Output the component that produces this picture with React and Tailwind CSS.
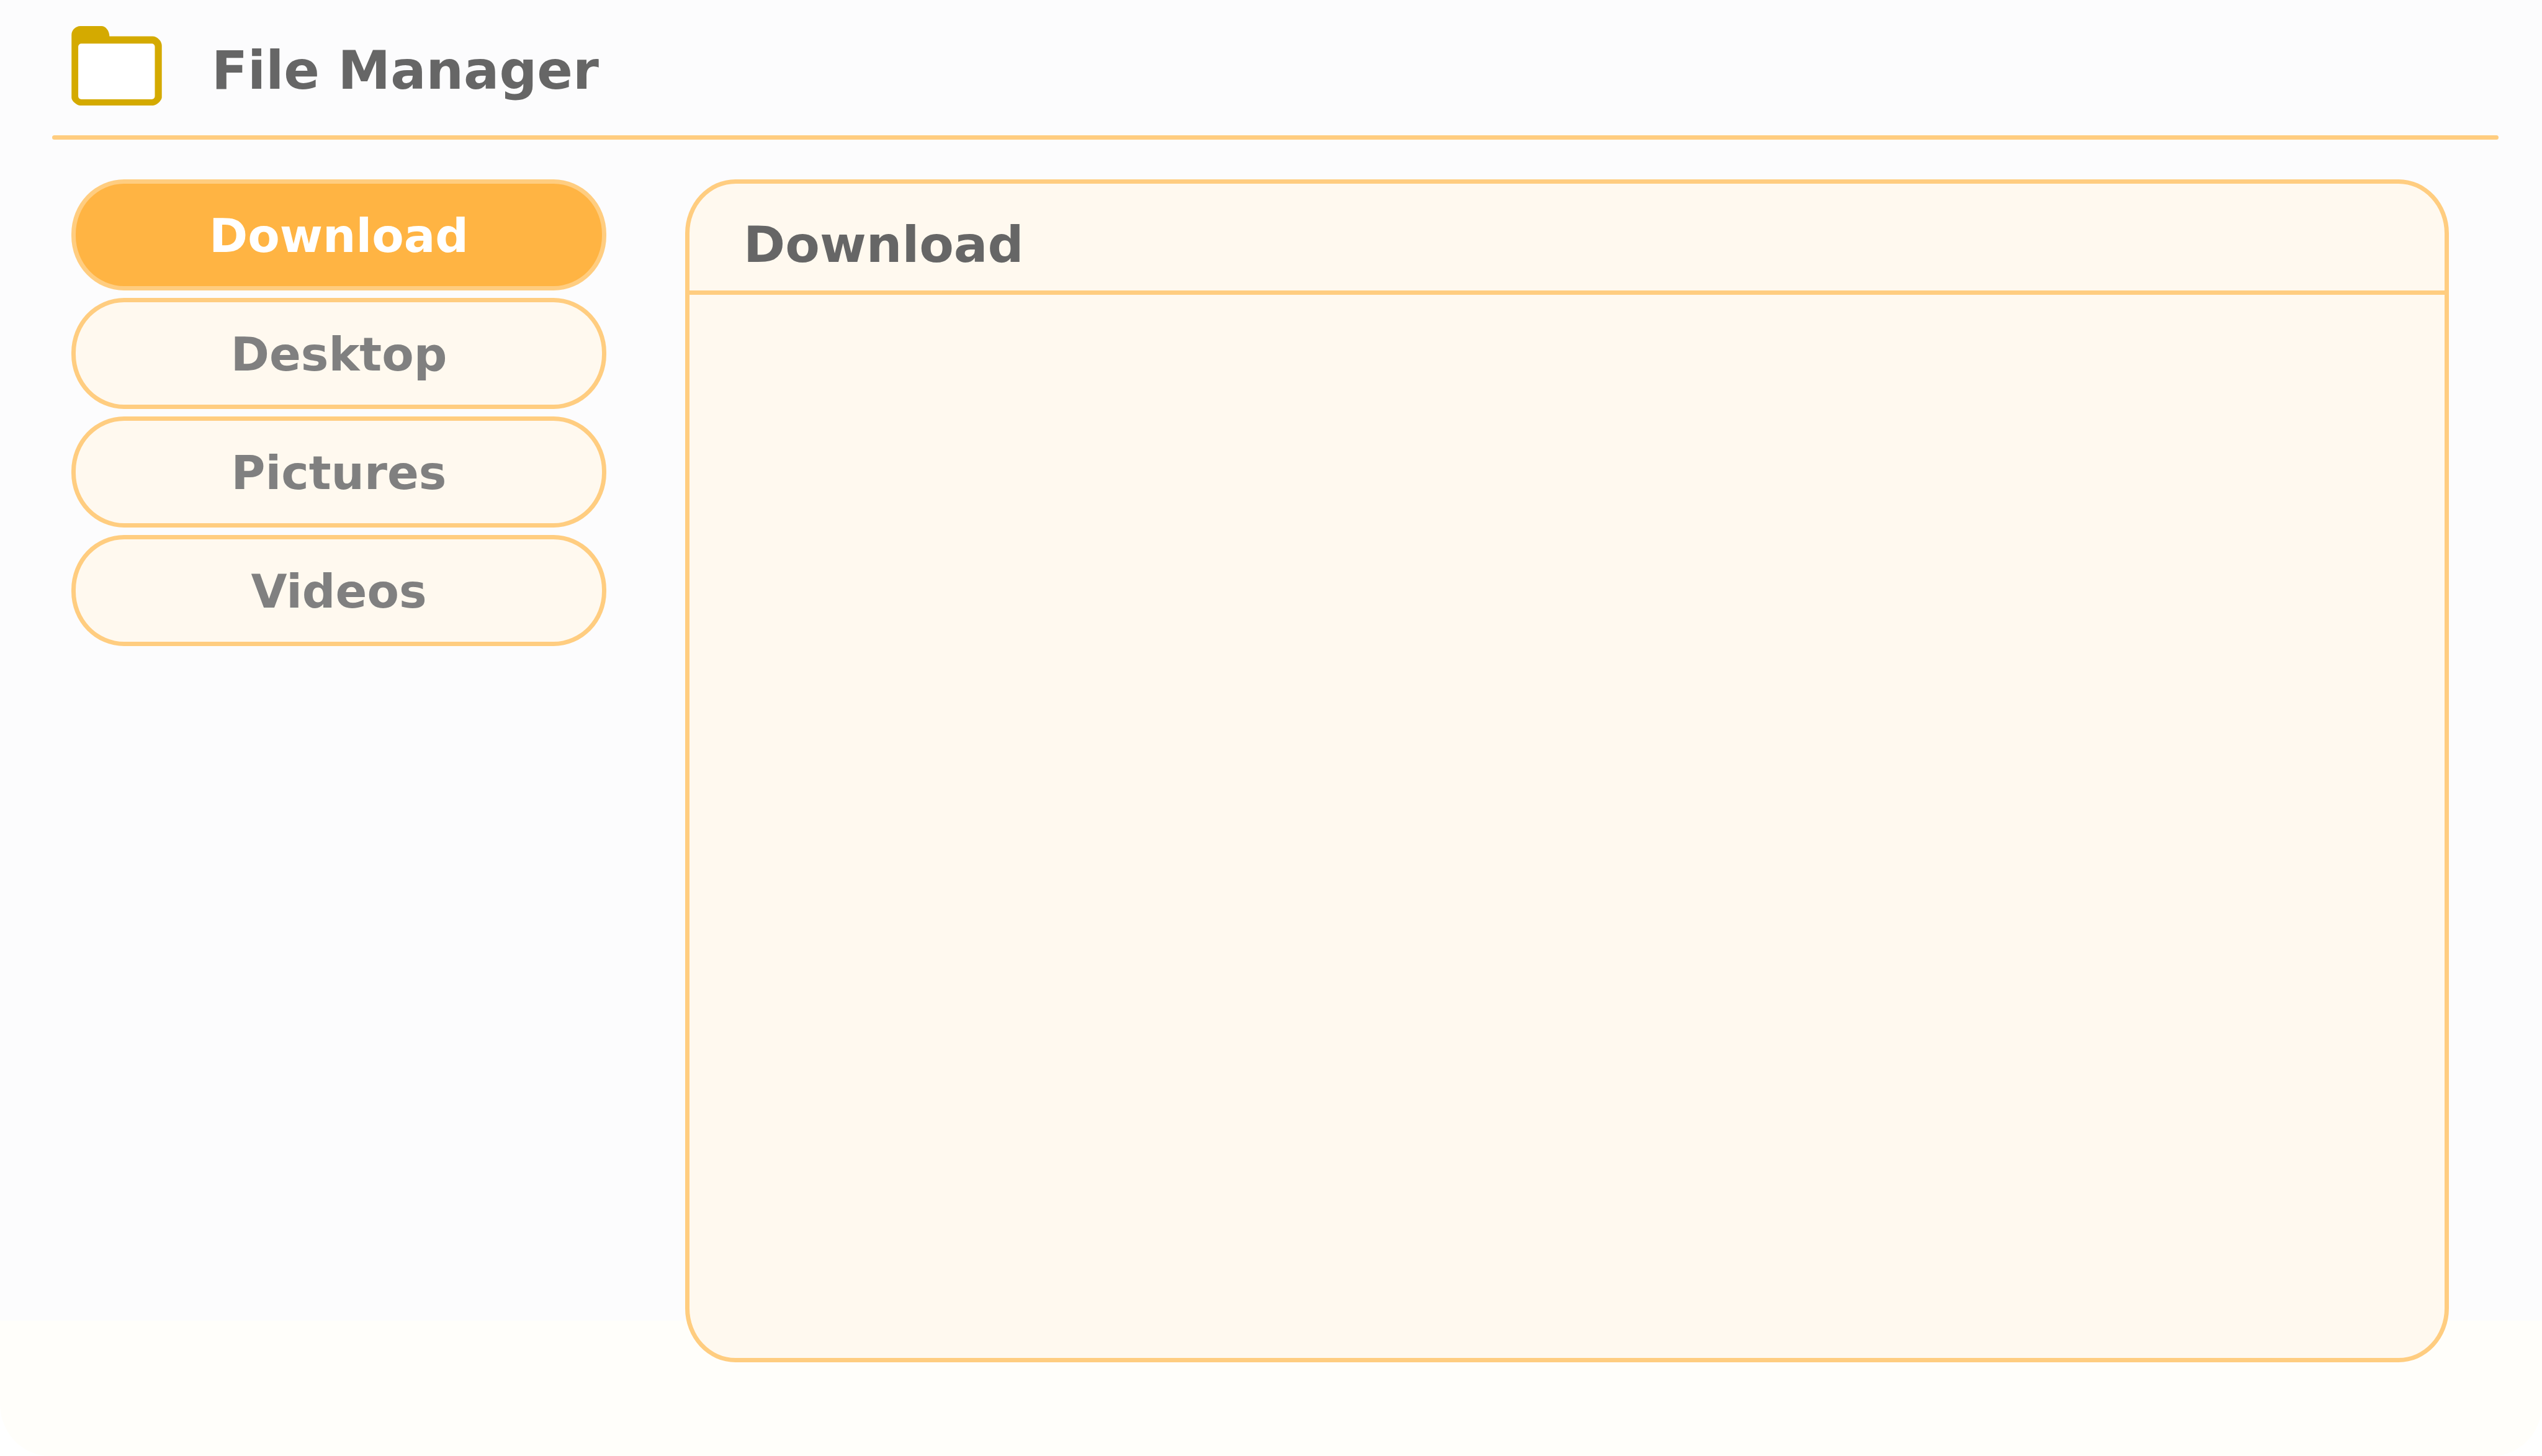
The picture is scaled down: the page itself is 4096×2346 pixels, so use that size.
import { useState } from "react";

const folders = ["Download", "Desktop", "Pictures", "Videos"];

function FolderIcon() {
  return (
    <svg viewBox="0 0 175 154" className="h-[128px] w-[146px] shrink-0" aria-hidden="true">
      <path
        fill="#d4aa00"
        d="M17 0H58C66 0 73.500 9 73.500 20H157C166 20 175 29 175 38V138C175 144 165 154 158 154H17C10 154 0 145 0 139V17C0 8 8 0 17 0Z"
      />
      <rect x="13" y="34" width="148.500" height="108" rx="6" fill="#fff" />
    </svg>
  );
}

export default function App() {
  const [active, setActive] = useState("Download");

  return (
    <div className="h-screen bg-white font-['DejaVu_Sans',Verdana,sans-serif] font-bold">
      <div className="flex h-full flex-col rounded-b-[80px_84px] bg-[linear-gradient(to_bottom,#fcfcfd_calc(100%-218px),#fffefa_calc(100%-218px))] pr-[70px] pb-[151px] pl-[84px]">
        <header className="flex h-[218px] shrink-0 items-start gap-[80px] pt-[42px] pl-[31px]">
          <FolderIcon />
          <h1 className="pt-[20px] text-[85px] leading-[104px] whitespace-nowrap text-[#666666]">File Manager</h1>
        </header>
        <div className="h-[7px] shrink-0 rounded-full bg-[#ffcd80]" />

        <div className="flex min-h-0 flex-1 gap-[127px] pt-[64px] pr-[80px] pl-[31px]">
          <nav className="flex w-[862px] shrink-0 flex-col gap-3" aria-label="Folders">
            {folders.map((name) => (
              <button
                key={name}
                type="button"
                aria-pressed={name === active}
                onClick={() => setActive(name)}
                className={`h-[179px] rounded-[85px_/_88px] border-[7px] border-[#ffcd80] pt-[3px] text-center text-[75px] leading-[90px] ${
                  name === active ? "bg-[#ffb443] text-white" : "bg-[#fff9ef] text-[#808080]"
                }`}
              >
                {name}
              </button>
            ))}
          </nav>

          <main className="flex min-w-0 flex-1 flex-col rounded-[81px_/_87px] border-[7px] border-[#ffcd80] bg-[#fff9ef]">
            <h2 className="h-[179px] shrink-0 border-b-[7px] border-[#ffcd80] pt-[50px] pl-[87px] text-[81px] leading-[96px] text-[#666666]">
              {active}
            </h2>
          </main>
        </div>
      </div>
    </div>
  );
}
